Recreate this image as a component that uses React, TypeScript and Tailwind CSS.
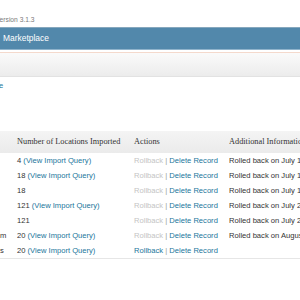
import React from "react";

const rows = [
  { first: "", num: "4", query: true, rb: false, info: "Rolled back on July 1" },
  { first: "", num: "18", query: true, rb: false, info: "Rolled back on July 1" },
  { first: "", num: "18", query: false, rb: false, info: "Rolled back on July 1" },
  { first: "", num: "121", query: true, rb: false, info: "Rolled back on July 2" },
  { first: "", num: "121", query: false, rb: false, info: "Rolled back on July 2" },
  { first: "m", num: "20", query: true, rb: false, info: "Rolled back on August" },
  { first: "s", num: "20", query: true, rb: true, info: "" },
];

export default function App() {
  const sans = { fontFamily: '"Liberation Sans", Arial, sans-serif' };
  const serif = { fontFamily: '"Liberation Serif", "Times New Roman", serif' };
  return (
    <div className="w-[300px] h-[300px] overflow-hidden bg-white" style={sans}>
      <div className="pt-[15px] h-[25px] leading-[10px] text-[6.7px] text-[#7a7a7a] whitespace-nowrap ml-[-4.5px]">
        Version 3.1.3
      </div>
      <div className="mt-[2px] h-[23px] bg-[#5288ab] border-t border-t-[#86a7bd] border-b border-b-[#8fb3cb] flex items-center pl-[3px] text-white text-[8.45px]">
        Marketplace
      </div>
      <div className="mt-[2px] h-px bg-[#f4d9cc]" />
      <div className="h-[24px] bg-gradient-to-b from-[#fafafa] to-[#ececec] border-b border-b-[#e2e2e2]" />
      <div className="mt-[4px] h-[10px] leading-[10px] text-[7.6px] text-[#21759b] ml-[-1px]">e</div>
      <div className="mt-[40px] border-b border-b-[#e6e6e6]">
        <div
          className="grid grid-cols-[17px_117px_95px_1fr] h-[22px] items-center bg-gradient-to-b from-[#f4f4f4] to-[#ebebeb] text-[8.3px] text-[#333] whitespace-nowrap"
          style={serif}
        >
          <div />
          <div>Number of Locations Imported</div>
          <div>Actions</div>
          <div className="overflow-hidden">Additional Information</div>
        </div>
        {rows.map((r, i) => (
          <div
            key={i}
            className="grid grid-cols-[17px_117px_95px_1fr] h-[15px] items-center text-[7.6px] text-[#333] whitespace-nowrap"
          >
            <div className="overflow-hidden">{r.first}</div>
            <div>
              {r.num}
              {r.query && (
                <>
                  {" "}
                  <span className="text-[#21759b]">(View Import Query)</span>
                </>
              )}
            </div>
            <div>
              <span className={r.rb ? "text-[#21759b]" : "text-[#c4c4c4]"}>Rollback</span>
              <span className="text-[#999]"> | </span>
              <span className="text-[#21759b]">Delete Record</span>
            </div>
            <div className="overflow-hidden">{r.info}</div>
          </div>
        ))}
      </div>
    </div>
  );
}
